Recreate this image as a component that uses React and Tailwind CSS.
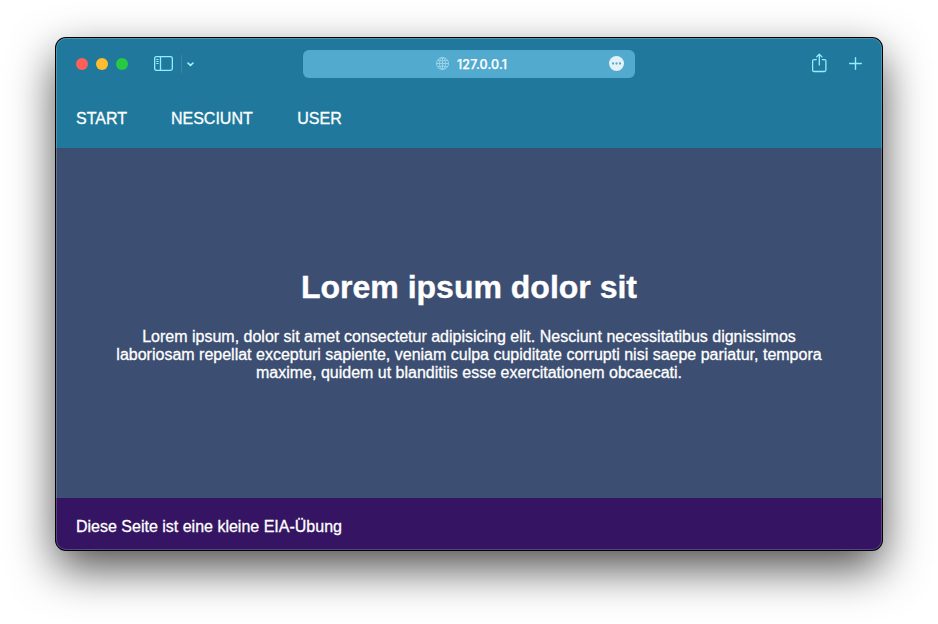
export default function App() {
  return (
    <div className="h-[624px] w-[938px] overflow-hidden bg-white px-14 pt-[38px] font-['Liberation_Sans',Arial,sans-serif] text-white">
      <div className="relative flex h-[512px] w-[826px] flex-col overflow-hidden rounded-[10px] bg-[#3c4e71] shadow-[0_0_0_1px_#000,0_18px_46px_rgba(0,0,0,0.7)]">
        <header className="h-[110px] bg-[#20799d]">
          <div className="flex h-[52px] items-center pl-5 pr-5">
            <div className="flex w-[227px] items-center">
              <div className="flex gap-2">
                <span className="size-3 rounded-full bg-[#ff5f57]" />
                <span className="size-3 rounded-full bg-[#febc2e]" />
                <span className="size-3 rounded-full bg-[#28c840]" />
              </div>
              <svg className="-mt-px ml-[26px]" width="19" height="15" viewBox="0 0 19 15" fill="none" stroke="#93edff" strokeWidth="1.3">
                <rect x=".65" y=".65" width="17.7" height="13.7" rx="1.8" />
                <path d="M6.5 1v13" />
                <path d="M2.3 3.5h2.3M2.3 5.5h2.3M2.3 7.5h2.3" strokeWidth="1" />
              </svg>
              <span className="ml-2 h-[18px] w-px bg-[#3487a8]" />
              <svg className="ml-[5px]" width="7" height="5" viewBox="0 0 7 5" fill="none" stroke="#a9f2ff" strokeWidth="1.6" strokeLinecap="round" strokeLinejoin="round"><path d="M1 1l2.5 2.4L6 1" /></svg>
            </div>
            <div className="flex h-7 w-[332px] items-center rounded-md bg-[#53aacf] pl-[133px] pr-[11px]">
              <svg className="-mt-px shrink-0" width="13" height="13" viewBox="0 0 13 13" fill="none" stroke="#9bd3e9" strokeWidth="1"><circle cx="6.5" cy="6.5" r="6" /><ellipse cx="6.5" cy="6.5" rx="3" ry="6" /><path d="M.5 6.5h12M6.5.5v12M1.8 3.2q4.7 1.6 9.4 0M1.8 9.8q4.7-1.6 9.4 0" /></svg>
              <span className="ml-2 mt-0.5 font-['Inter'] text-[12.5px] font-medium tracking-[0.15px] [-webkit-text-stroke:0.25px_white]">127.0.0.1</span>
              <svg className="-mt-px ml-auto" width="15" height="15" viewBox="0 0 15 15"><circle cx="7.5" cy="7.5" r="7.5" fill="#e4f2f8" /><g fill="#53aacf"><circle cx="4" cy="7.5" r="1.15" /><circle cx="7.5" cy="7.5" r="1.15" /><circle cx="11" cy="7.5" r="1.15" /></g></svg>
            </div>
            <div className="-mt-0.5 ml-auto flex items-center gap-[22px]">
              <svg width="15" height="20" viewBox="0 0 15 20" fill="none" stroke="#93edff" strokeWidth="1.3" strokeLinecap="round" strokeLinejoin="round"><path d="M4.3 6.6H2.1Q.6 6.6 .6 8.1v8.9q0 1.5 1.5 1.5h10.3q1.5 0 1.5-1.5V8.1Q13.9 6.6 12.4 6.6h-2.1M7.3 12V1.3M4.6 3.9l2.7-2.7L10 3.9" /></svg>
              <svg width="13" height="13" viewBox="0 0 13 13" fill="none" stroke="#93edff" strokeWidth="1.4" strokeLinecap="round"><path d="M6.5.7v11.6M.7 6.5h11.6" /></svg>
            </div>
          </div>
          <nav className="flex h-[58px] items-center gap-11 pl-5 text-base [-webkit-text-stroke:0.3px_white]">
            <a>START</a><a>NESCIUNT</a><a className="ml-[0.5px]">USER</a>
          </nav>
        </header>
        <main className="flex h-[350px] flex-col px-[50px] pt-[121px] text-center">
          <h1 className="text-[32px] font-bold leading-9 [-webkit-text-stroke:0.4px_white]">Lorem ipsum dolor sit</h1>
          <p className="mt-[23px] text-base leading-[18px] [-webkit-text-stroke:0.3px_white]">Lorem ipsum, dolor sit amet consectetur adipisicing elit. Nesciunt necessitatibus dignissimos<br />laboriosam repellat excepturi sapiente, veniam culpa cupiditate corrupti nisi saepe pariatur, tempora<br />maxime, quidem ut blanditiis esse exercitationem obcaecati.</p>
        </main>
        <footer className="flex h-[52px] items-center bg-[#351463] pl-5 pt-1.5 text-base [-webkit-text-stroke:0.3px_white]">Diese Seite ist eine kleine EIA-Übung</footer>
        <div className="pointer-events-none absolute inset-0 rounded-[10px] border border-white/20" />
      </div>
    </div>
  );
}
